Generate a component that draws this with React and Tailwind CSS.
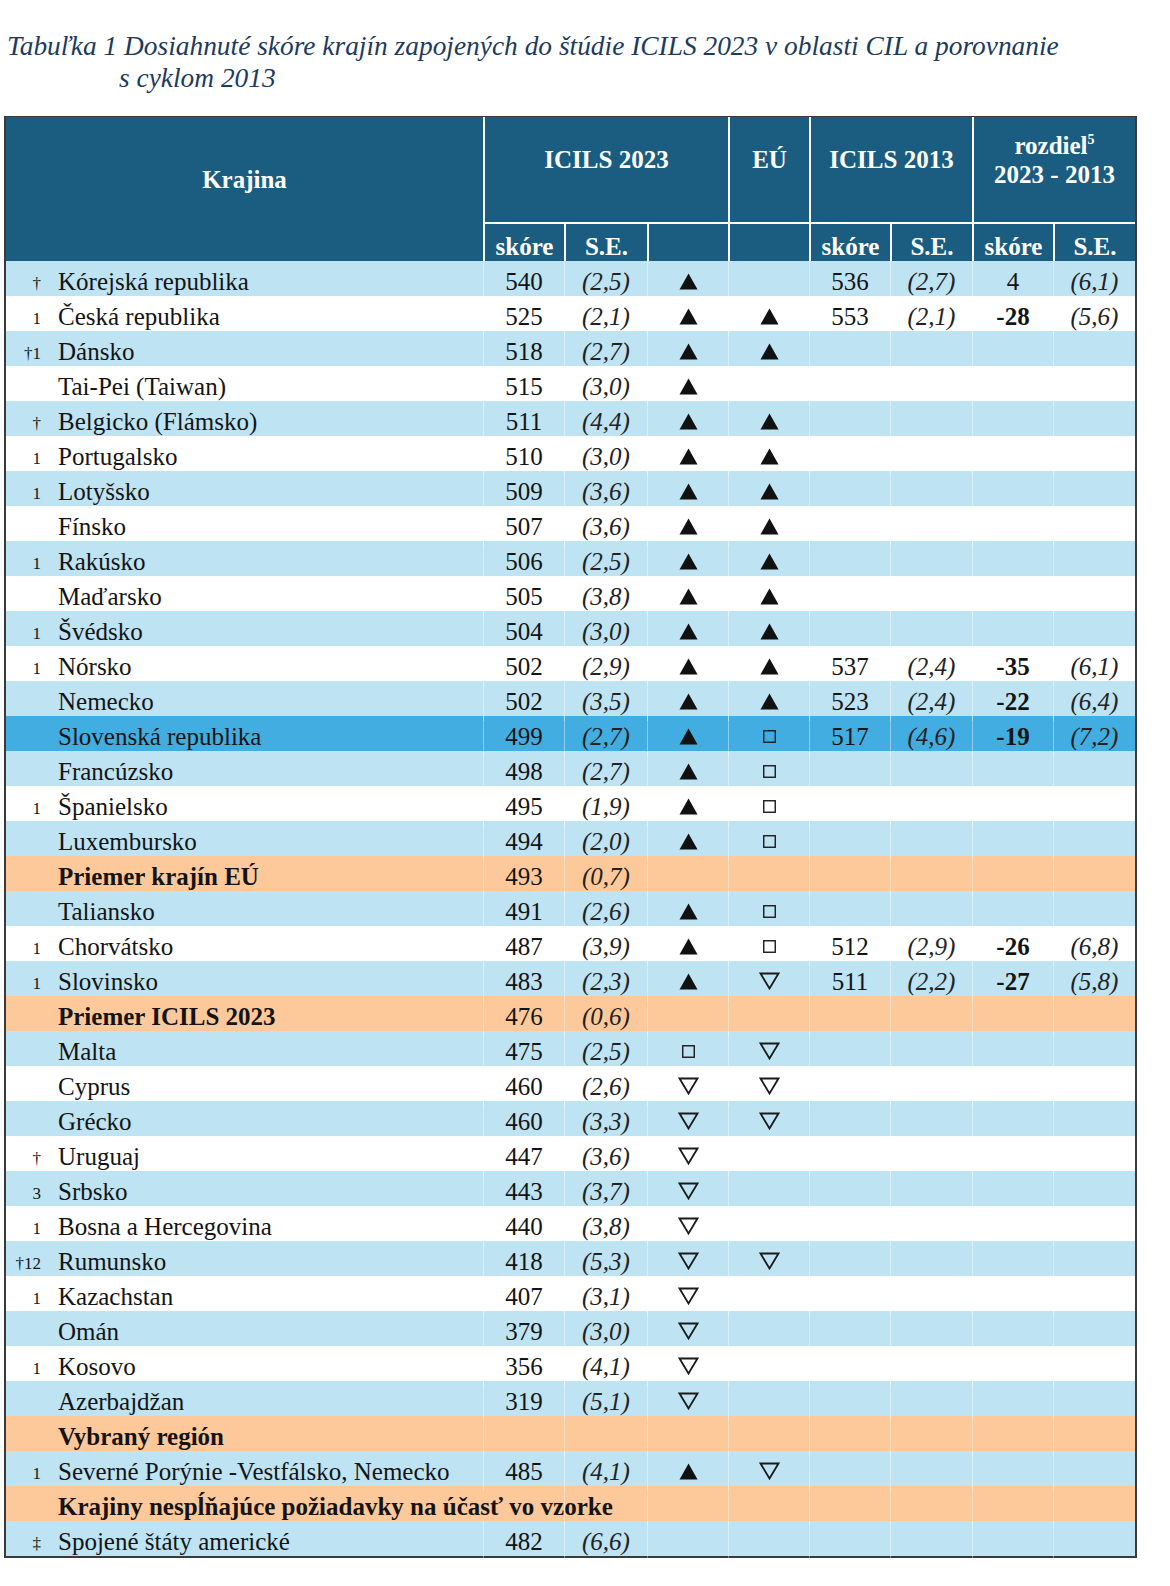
import React from 'react';

const COLS = 'grid grid-cols-[477px_81px_83px_81px_81px_81px_82px_81px_82px]';

const BG = {
  b: 'bg-[#bee3f3]',
  w: 'bg-white',
  s: 'bg-[#42ade0]',
  o: 'bg-[#fdc99a]',
};

// [bg, marker, name, score, se, vsAvg, eu, s13, se13, diff, seDiff, diffBold, bold, span]
const rows = [
  ['b', '†', 'Kórejská republika', '540', '(2,5)', 'up', '', '536', '(2,7)', '4', '(6,1)'],
  ['w', '1', 'Česká republika', '525', '(2,1)', 'up', 'up', '553', '(2,1)', '-28', '(5,6)', true],
  ['b', '†1', 'Dánsko', '518', '(2,7)', 'up', 'up'],
  ['w', '', 'Tai-Pei (Taiwan)', '515', '(3,0)', 'up', ''],
  ['b', '†', 'Belgicko (Flámsko)', '511', '(4,4)', 'up', 'up'],
  ['w', '1', 'Portugalsko', '510', '(3,0)', 'up', 'up'],
  ['b', '1', 'Lotyšsko', '509', '(3,6)', 'up', 'up'],
  ['w', '', 'Fínsko', '507', '(3,6)', 'up', 'up'],
  ['b', '1', 'Rakúsko', '506', '(2,5)', 'up', 'up'],
  ['w', '', 'Maďarsko', '505', '(3,8)', 'up', 'up'],
  ['b', '1', 'Švédsko', '504', '(3,0)', 'up', 'up'],
  ['w', '1', 'Nórsko', '502', '(2,9)', 'up', 'up', '537', '(2,4)', '-35', '(6,1)', true],
  ['b', '', 'Nemecko', '502', '(3,5)', 'up', 'up', '523', '(2,4)', '-22', '(6,4)', true],
  ['s', '', 'Slovenská republika', '499', '(2,7)', 'up', 'sq', '517', '(4,6)', '-19', '(7,2)', true],
  ['b', '', 'Francúzsko', '498', '(2,7)', 'up', 'sq'],
  ['w', '1', 'Španielsko', '495', '(1,9)', 'up', 'sq'],
  ['b', '', 'Luxembursko', '494', '(2,0)', 'up', 'sq'],
  ['o', '', 'Priemer krajín EÚ', '493', '(0,7)', '', '', '', '', '', '', false, true],
  ['b', '', 'Taliansko', '491', '(2,6)', 'up', 'sq'],
  ['w', '1', 'Chorvátsko', '487', '(3,9)', 'up', 'sq', '512', '(2,9)', '-26', '(6,8)', true],
  ['b', '1', 'Slovinsko', '483', '(2,3)', 'up', 'down', '511', '(2,2)', '-27', '(5,8)', true],
  ['o', '', 'Priemer ICILS 2023', '476', '(0,6)', '', '', '', '', '', '', false, true],
  ['b', '', 'Malta', '475', '(2,5)', 'sq', 'down'],
  ['w', '', 'Cyprus', '460', '(2,6)', 'down', 'down'],
  ['b', '', 'Grécko', '460', '(3,3)', 'down', 'down'],
  ['w', '†', 'Uruguaj', '447', '(3,6)', 'down', ''],
  ['b', '3', 'Srbsko', '443', '(3,7)', 'down', ''],
  ['w', '1', 'Bosna a Hercegovina', '440', '(3,8)', 'down', ''],
  ['b', '†12', 'Rumunsko', '418', '(5,3)', 'down', 'down'],
  ['w', '1', 'Kazachstan', '407', '(3,1)', 'down', ''],
  ['b', '', 'Omán', '379', '(3,0)', 'down', ''],
  ['w', '1', 'Kosovo', '356', '(4,1)', 'down', ''],
  ['b', '', 'Azerbajdžan', '319', '(5,1)', 'down', ''],
  ['o', '', 'Vybraný región', '', '', '', '', '', '', '', '', false, true],
  ['b', '1', 'Severné Porýnie -Vestfálsko, Nemecko', '485', '(4,1)', 'up', 'down'],
  ['o', '', 'Krajiny nespĺňajúce požiadavky na účasť vo vzorke', '', '', '', '', '', '', '', '', false, true, true],
  ['b', '‡', 'Spojené štáty americké', '482', '(6,6)', '', ''],
];

function Mark({ type }) {
  if (type === 'up')
    return (
      <svg width="19" height="17" viewBox="0 0 19 17"><polygon points="9.5,0.5 18.5,16.5 0.5,16.5" fill="#111" /></svg>
    );
  if (type === 'down')
    return (
      <svg width="21" height="18" viewBox="0 0 21 18"><polygon points="1.5,1.5 19.5,1.5 10.5,16.5" fill="none" stroke="#1a1a1a" strokeWidth="1.8" strokeLinejoin="miter" /></svg>
    );
  if (type === 'sq')
    return (
      <svg width="13" height="13" viewBox="0 0 13 13"><rect x="0.75" y="0.75" width="11.5" height="11.5" fill="none" stroke="#1a1a1a" strokeWidth="1.4" /></svg>
    );
  return null;
}

const cell = 'flex items-center justify-center border-l border-white/40';

function Row({ r }) {
  const [bg, marker, name, score, se, vs, eu, s13 = '', se13 = '', diff = '', seDiff = '', diffBold = false, bold = false, span = false] = r;
  return (
    <div className={`${COLS} h-[35px] ${BG[bg]} text-[25px] text-[#141414]`}>
      <div className={`flex items-center pt-[2px] ${span ? 'col-span-2' : ''}`}>
        <span className="w-[35px] shrink-0 text-right text-[17px] leading-none pt-[3px]">{marker}</span>
        <span className={`ml-[17px] whitespace-nowrap ${bold ? 'font-bold' : ''}`}>{name}</span>
      </div>
      {!span && <div className={`${cell} pt-[2px]`}>{score}</div>}
      <div className={`${cell} pt-[2px] italic text-[#222]`}>{se}</div>
      <div className={`${cell} pt-[1px]`}><Mark type={vs} /></div>
      <div className={`${cell} pt-[1px]`}><Mark type={eu} /></div>
      <div className={`${cell} pt-[2px]`}>{s13}</div>
      <div className={`${cell} pt-[2px] italic text-[#222]`}>{se13}</div>
      <div className={`${cell} pt-[2px] ${diffBold ? 'font-bold' : ''}`}>{diff}</div>
      <div className={`${cell} pt-[2px] italic text-[#222]`}>{seDiff}</div>
    </div>
  );
}

export default function App() {
  return (
    <div className="w-[1170px] min-h-[1586px] bg-white font-['Liberation_Serif','Times_New_Roman',serif]">
      <div className="pt-[30px] pl-[7px] italic text-[27.4px] leading-[32px] text-[#1d3b5e]">
        <div className="whitespace-nowrap">Tabuľka 1 Dosiahnuté skóre krajín zapojených do štúdie ICILS 2023 v oblasti CIL a porovnanie</div>
        <div className="pl-[112px]">s cyklom 2013</div>
      </div>
      <div className="mt-[22px] ml-[4px] w-[1133px] border-x-2 border-b-2 border-t border-[#3a3a3a]">
        {/* header */}
        <div className={`${COLS} grid-rows-[105px_39px] bg-[#1b5d80] text-white font-bold text-[25px] leading-[29px]`}>
          <div className="row-span-2 flex justify-center pt-[48px]">Krajina</div>
          <div className="col-span-3 flex justify-center pt-[28px] border-l-2 border-white">ICILS 2023</div>
          <div className="flex justify-center pt-[28px] border-l-2 border-white">EÚ</div>
          <div className="col-span-2 flex justify-center pt-[28px] border-l-2 border-white">ICILS 2013</div>
          <div className="col-span-2 flex flex-col items-center pt-[14px] border-l-2 border-white">
            <span>rozdiel<sup className="text-[14px] relative -top-[10px] leading-none">5</sup></span>
            <span>2023 - 2013</span>
          </div>
          {['skóre', 'S.E.', '', '', 'skóre', 'S.E.', 'skóre', 'S.E.'].map((t, i) => (
            <div key={i} className="flex justify-center pt-[8px] border-l-2 border-t-2 border-white">{t}</div>
          ))}
        </div>
        {rows.map((r, i) => <Row key={i} r={r} />)}
      </div>
    </div>
  );
}
